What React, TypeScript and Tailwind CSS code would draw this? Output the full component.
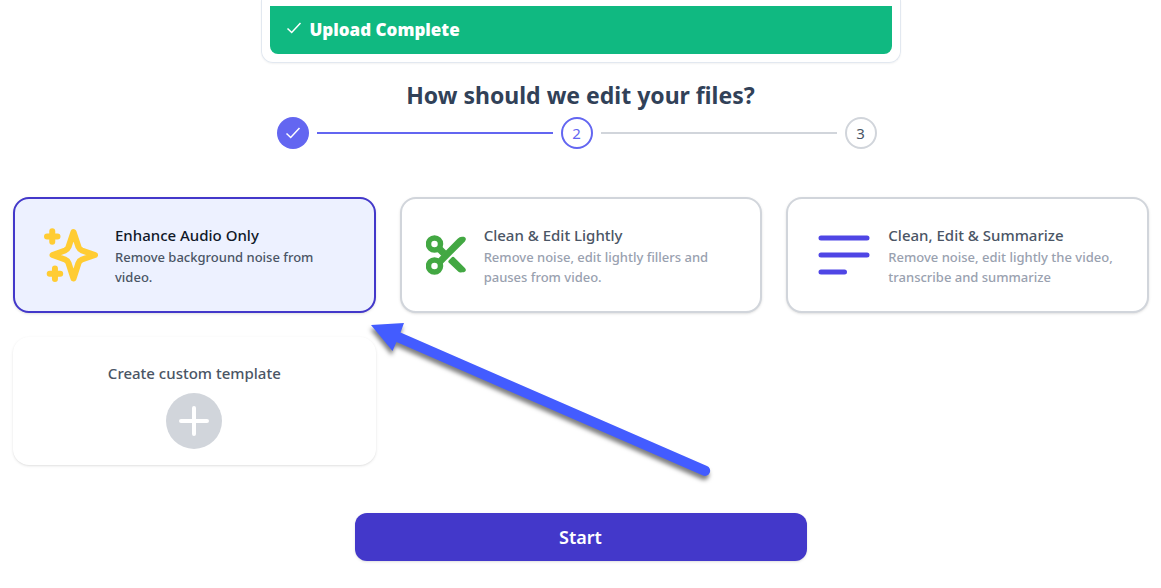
import React from "react";
import { clsx } from "clsx";

const SparkleIcon: React.FC = () => (
  <svg viewBox="0 0 64 64" className="w-16 h-16" fill="none" stroke="#ffcc33" strokeLinecap="round" strokeLinejoin="round" aria-hidden="true">
    <path strokeWidth="6" d="M34.5 9 L39.5 24 Q40.5 26.5 43 27.5 L56 32 L43 36.5 Q40.5 37.5 39.5 40 L34.5 55.5 L29.5 40 Q28.5 37.5 26 36.5 L13.5 32 L26 27.5 Q28.5 26.5 29.5 24 Z" />
    <path strokeWidth="6" d="M8 13.5h10.5M13.25 8.25v10.5M10.7 50.7h10.5M15.95 45.45v10.5" />
  </svg>
);

const ScissorsIcon: React.FC = () => (
  <svg viewBox="0 0 46 46" className="w-[46px] h-[46px]" fill="none" stroke="#43a843" aria-hidden="true">
    <circle cx="8.5" cy="12" r="6" strokeWidth="5.5" />
    <circle cx="8.5" cy="34" r="6" strokeWidth="5.5" />
    <path strokeWidth="7" d="M12 15.5 L18 21.5" />
    <path fill="#43a843" strokeWidth="2.5" strokeLinejoin="round" d="M12.5 28 L32.5 7.5 Q34 6 36 6 H37.5 Q39.5 6.5 38 8.5 L15.5 31 Z" />
    <path fill="#43a843" strokeWidth="2.5" strokeLinejoin="round" d="M23.5 29.5 L27 26 L38 37 Q39.500 38.5 37.5 39 H35.5 Q34 39.5 33 38.5 Z" />
  </svg>
);

const LinesIcon: React.FC = () => (
  <svg viewBox="0 0 64 64" className="w-16 h-16" fill="none" stroke="#4f46e5" strokeWidth="5" strokeLinecap="round" aria-hidden="true">
    <path d="M9 15h46M9 32h46M9 49h23.5" />
  </svg>
);

const CheckIcon: React.FC<{ className?: string }> = ({ className }) => (
  <svg viewBox="0 0 16 16" className={clsx("w-4 h-4", className)} fill="none" stroke="currentColor" strokeWidth="1.5" aria-hidden="true">
    <path d="M1.5 8.5l4.2 4L14.5 3" />
  </svg>
);

const templates = [
  {
    title: "Enhance Audio Only",
    description: "Remove background noise from video.",
    icon: <SparkleIcon />,
    selected: true,
  },
  {
    title: "Clean & Edit Lightly",
    description: "Remove noise, edit lightly fillers and pauses from video.",
    icon: <ScissorsIcon />,
    selected: false,
  },
  {
    title: "Clean, Edit & Summarize",
    description: "Remove noise, edit lightly the video, transcribe and summarize",
    icon: <LinesIcon />,
    selected: false,
  },
];

// Callout arrow that points at the selected template
const PointerArrow: React.FC = () => (
  <svg
    viewBox="364 317 356 176"
    className="absolute left-full top-full -ml-3 mt-1 w-[356px] h-[176px] max-w-none z-10 pointer-events-none drop-shadow-[-1px_4px_2px_rgba(0,0,0,0.5)]"
    aria-hidden="true"
  >
    <path fill="#435cff" d="M371 325 L404 323 L400.5 332.5 L707 466 A5 5 0 0 1 703 475.5 L396.5 342 L392.5 351 Z" />
  </svg>
);

const App: React.FC = () => {
  return (
    <main className="min-h-screen bg-white px-3 pb-6 font-['Noto_Sans','Open_Sans',sans-serif]">
      <div className="max-w-[640px] mx-auto px-2 pt-1.5 pb-2 border border-t-0 border-slate-200 rounded-b-xl shadow-xs">
        <div className="flex gap-2 h-12 px-4 bg-[#10b981] rounded-b-lg text-white" role="status">
          <CheckIcon className="mt-3.5" />
          <p className="text-[17px] leading-[48px] font-black">Upload Complete</p>
        </div>
      </div>

      <h1 className="mt-4 mb-1.5 text-center text-[23px] leading-8 font-bold text-slate-700">
        How should we edit your files?
      </h1>

      <ol className="flex items-center gap-2 max-w-[608px] mx-auto pr-2">
        <li className="flex items-center justify-center w-8 h-8 rounded-full bg-[#6366f1] text-white" aria-label="Step 1">
          <CheckIcon />
        </li>
        <li className="flex-1 h-0.5 bg-[#6366f1]" role="presentation"></li>
        <li className="flex items-center justify-center w-8 h-8 rounded-full border-2 border-[#6366f1] text-[15px] text-[#6366f1]" aria-current="step">
          2
        </li>
        <li className="flex-1 h-0.5 bg-[#d1d5db]" role="presentation"></li>
        <li className="flex items-center justify-center w-8 h-8 rounded-full border-2 border-[#d1d5db] text-[15px] text-gray-600">
          3
        </li>
      </ol>

      <ul className="grid grid-cols-3 gap-6 max-w-[1137px] mx-auto mt-12 pl-px">
        {templates.map((template) => (
          <li key={template.title} className="relative">
            <button
              type="button"
              aria-pressed={template.selected}
              className={clsx(
                "flex items-center gap-3 w-full h-full p-6 rounded-2xl border-2 text-left shadow-sm",
                template.selected ? "border-[#4338ca] bg-[#edf1ff]" : "border-[#d1d5db] bg-white"
              )}
            >
              <span className="shrink-0">{template.icon}</span>
              <span>
                <span className={clsx("block text-[15px] leading-6 font-medium", template.selected ? "text-gray-900" : "text-gray-600")}>
                  {template.title}
                </span>
                <span className={clsx("block text-[13px] leading-5 font-medium", template.selected ? "text-gray-600" : "text-gray-400")}>
                  {template.description}
                </span>
              </span>
            </button>
            {template.selected && <PointerArrow />}
          </li>
        ))}
        <li>
          <button
            type="button"
            className="flex flex-col items-center gap-2 w-full pt-6 pb-4 rounded-2xl bg-white shadow-sm"
          >
            <span className="text-[15px] leading-6 font-medium text-gray-600">Create custom template</span>
            <span className="flex items-center justify-center w-14 h-14 rounded-full bg-[#d1d5db]">
              <svg viewBox="0 0 32 32" className="w-8 h-8" stroke="white" strokeWidth="4" strokeLinecap="round" aria-hidden="true">
                <path d="M3 16h26M16 3v26" />
              </svg>
            </span>
          </button>
        </li>
      </ul>

      <button
        type="button"
        className="block w-full max-w-[452px] h-12 mx-auto mt-12 rounded-xl bg-[#4338ca] text-lg font-semibold text-white shadow-sm"
      >
        Start
      </button>
    </main>
  );
};

export default App;
